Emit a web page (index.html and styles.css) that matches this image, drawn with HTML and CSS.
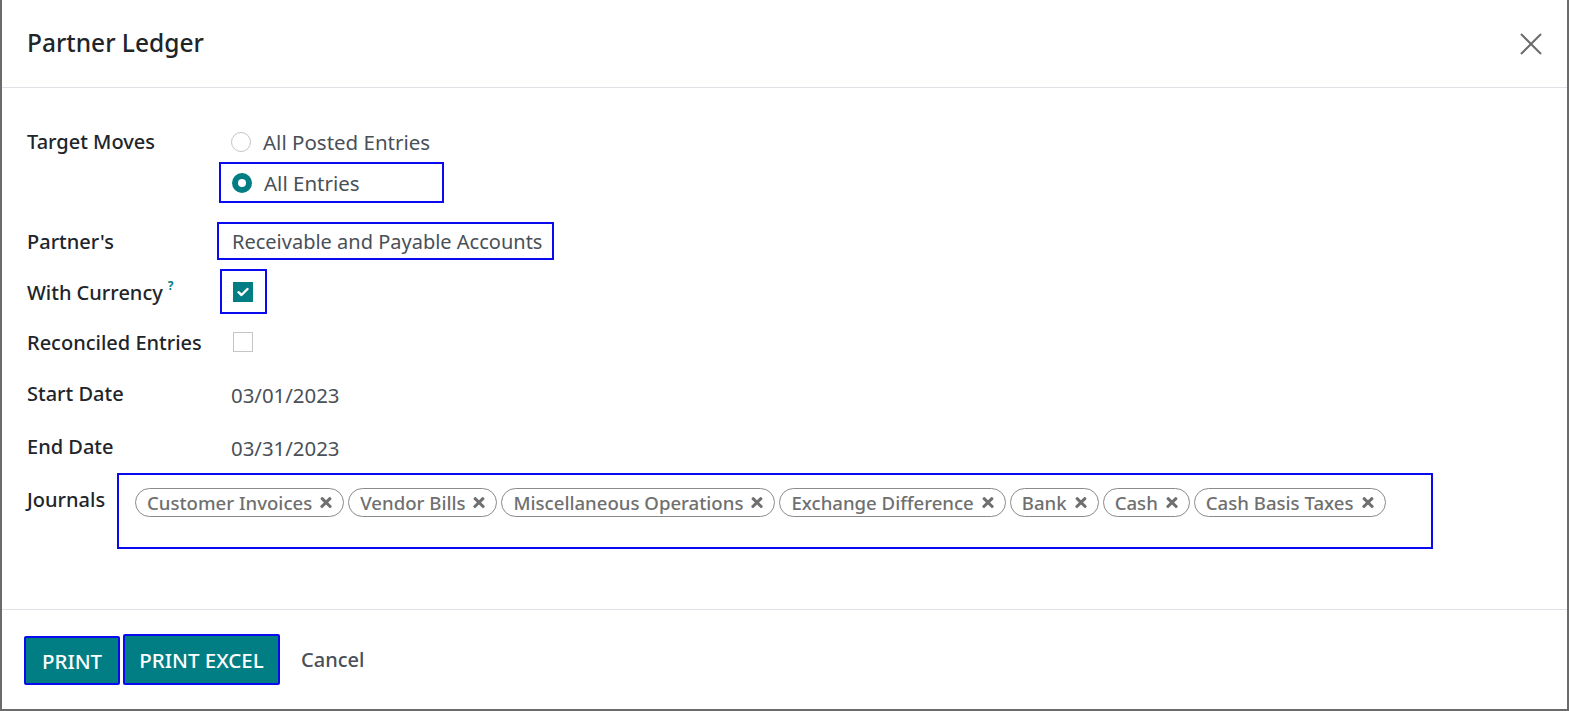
FILE: index.html
```html
<!DOCTYPE html>
<html>
<head>
<meta charset="utf-8">
<link rel="stylesheet" href="styles.css">
</head>
<body>
<div class="dialog">
  <header class="head">
    <h1 class="title">Partner Ledger</h1>
    <button class="close" aria-label="Close">
      <svg width="24" height="24" viewBox="0 0 24 24"><path d="M2 2 L22 22 M22 2 L2 22" stroke="#6c6c6c" stroke-width="2" fill="none"/></svg>
    </button>
  </header>
  <main class="body">
    <div class="row row-target">
      <div class="label lh40">Target Moves</div>
      <div class="radios">
        <div class="radio-item plain"><span class="radio"></span><span class="rtext">All Posted Entries</span></div>
        <div class="radio-item hl"><span class="radio on"></span><span class="rtext">All Entries</span></div>
      </div>
    </div>
    <div class="row row-partner">
      <div class="label">Partner's</div>
      <div class="hl partner-box">Receivable and Payable Accounts</div>
    </div>
    <div class="row row-currency">
      <div class="label">With Currency<sup class="help">?</sup></div>
      <div class="hl check-box"><span class="check on"><svg width="12" height="10" viewBox="0 0 12 10"><path d="M1.5 5.2 L4.5 8 L10.5 2" stroke="#fff" stroke-width="2.4" fill="none" stroke-linecap="round" stroke-linejoin="round"/></svg></span></div>
    </div>
    <div class="row row-reconciled">
      <div class="label">Reconciled Entries</div>
      <div class="plain-check"><span class="check"></span></div>
    </div>
    <div class="row row-date first-date">
      <div class="label">Start Date</div>
      <div class="value">03/01/2023</div>
    </div>
    <div class="row row-date">
      <div class="label">End Date</div>
      <div class="value">03/31/2023</div>
    </div>
    <div class="row row-journals">
      <div class="label jlabel">Journals</div>
      <div class="hl tags-box">
        <span class="tag">Customer Invoices<i class="x"></i></span>
        <span class="tag">Vendor Bills<i class="x"></i></span>
        <span class="tag">Miscellaneous Operations<i class="x"></i></span>
        <span class="tag">Exchange Difference<i class="x"></i></span>
        <span class="tag">Bank<i class="x"></i></span>
        <span class="tag">Cash<i class="x"></i></span>
        <span class="tag">Cash Basis Taxes<i class="x"></i></span>
      </div>
    </div>
  </main>
  <footer class="foot">
    <button class="btn btn-print">PRINT</button>
    <button class="btn btn-excel">PRINT EXCEL</button>
    <button class="cancel">Cancel</button>
  </footer>
</div>
</body>
</html>
```

FILE: styles.css
```css
* { box-sizing: border-box; }
html, body { margin: 0; padding: 0; }
body {
  background: #6b6b6b;
  width: 1569px;
  height: 711px;
  overflow: hidden;
  font-family: "Noto Sans", "Open Sans", sans-serif;
  color: #212529;
}
.dialog {
  margin-left: 2px;
  width: 1565px;
  height: 709px;
  background: #fff;
  display: flex;
  flex-direction: column;
}
.head {
  height: 88px;
  border-bottom: 1px solid #dee2e6;
  display: flex;
  align-items: center;
  justify-content: space-between;
  padding: 0 24px 0 25px;
}
.title {
  margin: 0 0 2px 0;
  font-size: 24.5px;
  font-weight: 500;
  color: #212529;
}
.close {
  border: 0;
  background: none;
  padding: 0;
  width: 24px;
  height: 24px;
}
.body {
  flex: 1;
  padding: 34px 0 0 25px;
}
.row { display: flex; }
.label {
  width: 190px;
  flex: none;
  font-size: 20px;
  font-weight: 500;
  color: #212529;
  white-space: nowrap;
}
.lh40 { line-height: 40px; }
.radios { display: flex; flex-direction: column; }
.radio-item {
  display: flex;
  align-items: center;
  font-size: 20.5px;
  color: #495057;
}
.radio-item.plain { height: 40px; padding-left: 14px; }
.radio-item.hl { height: 41px; width: 225px; margin-left: 2px; padding-left: 11px; }
.hl { border: 2px solid #0a0aef; }
.radio {
  width: 20px;
  height: 20px;
  border-radius: 50%;
  border: 1px solid #c5c5c5;
  margin-right: 12px;
  flex: none;
}
.radio.on {
  border: 6px solid #017e84;
  background: #fff;
}
.row-partner { margin-top: 19px; align-items: center; }
.partner-box {
  height: 38px;
  padding-left: 13px;
  padding-right: 10px;
  display: flex;
  align-items: center;
  font-size: 20px;
  color: #495057;
}
.row-currency { margin-top: 9px; align-items: center; }
.help {
  color: #017e84;
  font-size: 12px;
  font-weight: 700;
  margin-left: 5px;
  vertical-align: 10px;
}
.check-box {
  margin-left: 3px;
  width: 47px;
  height: 45px;
  padding-left: 11px;
  display: flex;
  align-items: center;
}
.check {
  width: 20px;
  height: 20px;
  border: 1px solid #c5c5c5;
  display: flex;
  align-items: center;
  justify-content: center;
}
.check.on { background: #017e84; border-color: #017e84; }
.row-reconciled { margin-top: 8px; height: 40px; align-items: center; }
.plain-check { padding-left: 16px; }
.row-date { height: 53px; align-items: center; }
.first-date { margin-top: 6px; }
.row-date .label { position: relative; top: -1px; }
.value { padding-left: 14px; font-size: 20.4px; color: #495057; }
.row-journals { margin-top: -1px; align-items: flex-start; }
.jlabel { width: 90px; padding-top: 13px; }
.tags-box {
  width: 1316px;
  height: 76px;
  padding: 13px 14px 0 16px;
  display: flex;
  flex-wrap: wrap;
  align-content: flex-start;
  gap: 4px;
}
.tag {
  display: inline-flex;
  align-items: center;
  height: 29px;
  padding: 0 11px 0 11px;
  border: 1px solid #8a8a8a;
  border-radius: 15px;
  font-size: 18.6px;
  color: #6f6f6f;
  font-weight: 500;
  white-space: nowrap;
}
.x {
  display: inline-block;
  width: 12px;
  height: 12px;
  margin-left: 8px;
  position: relative;
}
.x::before, .x::after {
  content: "";
  position: absolute;
  left: -1px;
  top: 4.5px;
  width: 14px;
  height: 3.4px;
  background: #6f6f6f;
  border-radius: 1px;
  transform: rotate(45deg);
}
.x::after { transform: rotate(-45deg); }
.foot {
  height: 100px;
  border-top: 1px solid #dee2e6;
  display: flex;
  align-items: center;
  padding-left: 22px;
  gap: 3px;
}
.btn {
  background: #017e84;
  color: #fff;
  font-family: inherit;
  font-size: 20.5px;
  font-weight: 500;
  border: 2px solid #0a0aef;
  border-radius: 2px;
  cursor: pointer;
  padding: 0;
}
.btn-print { width: 96px; height: 49px; margin-top: 2px; }
.btn-excel { width: 157px; height: 51px; }
.cancel {
  background: none;
  border: 0;
  font-family: inherit;
  font-size: 20px;
  font-weight: 500;
  color: #495057;
  margin-left: 18px;
  padding: 0;
}
```
